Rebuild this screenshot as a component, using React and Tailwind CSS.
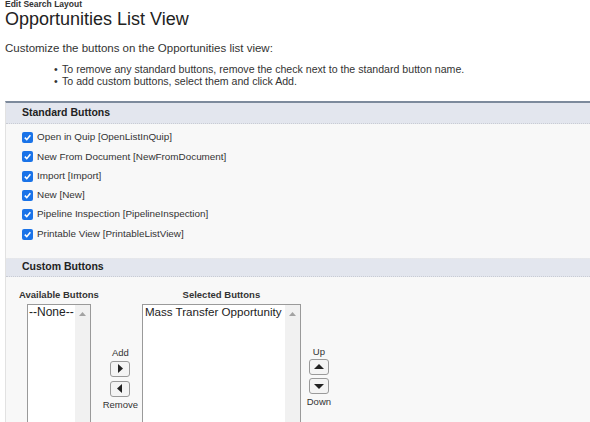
import React from "react";

const items = [
  "Open in Quip [OpenListInQuip]",
  "New From Document [NewFromDocument]",
  "Import [Import]",
  "New [New]",
  "Pipeline Inspection [PipelineInspection]",
  "Printable View [PrintableListView]",
];

function Check() {
  return (
    <span className="w-[11px] h-[11px] rounded-[2px] bg-[#1a73e8] flex items-center justify-center shrink-0">
      <svg width="9" height="9" viewBox="0 0 10 10">
        <path d="M2 5.2 L4.2 7.4 L8.2 2.6" stroke="white" strokeWidth="1.8" fill="none" />
      </svg>
    </span>
  );
}

function ScrollUp() {
  return (
    <div className="w-[15px] bg-[#f1f1f1] flex justify-center pt-[7px]">
      <svg width="7" height="4" viewBox="0 0 7 4"><path d="M0 4 L3.5 0 L7 4Z" fill="#a3a3a3" /></svg>
    </div>
  );
}

function ArrowBtn({ dir }) {
  const d = {
    right: "M3 0 L8 4.5 L3 9Z",
    left: "M7 0 L2 4.5 L7 9Z",
    up: "M0 7 L5 2 L10 7Z",
    down: "M0 3 L5 8 L10 3Z",
  }[dir];
  return (
    <div className="w-[20px] h-[16px] border border-[#9a9a9a] rounded-[3px] bg-[#f4f4f4] flex items-center justify-center">
      <svg width="10" height="9" viewBox="0 0 10 9"><path d={d} fill="#222" /></svg>
    </div>
  );
}

export default function App() {
  return (
    <div className="w-[590px] h-[422px] overflow-hidden bg-white text-[#222]" style={{ fontFamily: '"Liberation Sans", Arial, sans-serif' }}>
      <div className="pl-[5px]">
        <div className="text-[8.5px] font-bold leading-[9px] text-[#333]">Edit Search Layout</div>
        <div className="text-[18px] leading-[20px] text-[#222]">Opportunities List View</div>
        <div className="text-[11.5px] leading-[12px] mt-[13px] text-[#333]">Customize the buttons on the Opportunities list view:</div>
        <ul className="text-[10.6px] leading-[12px] mt-[9px] pl-[49px] text-[#333]">
          <li className="flex"><span className="w-[8px]">•</span>To remove any standard buttons, remove the check next to the standard button name.</li>
          <li className="flex"><span className="w-[8px]">•</span>To add custom buttons, select them and click Add.</li>
        </ul>
      </div>
      <div className="ml-[5px] mt-[14px] border-t-2 border-t-[#7d8a9c] border-l border-l-[#e2e2e2] bg-[#f8f8f8] h-[400px]">
        <div className="h-[21px] bg-[#e3e6ee] border-b border-dotted border-b-[#c9ccd4] flex items-center pl-[16px] text-[10.5px] font-bold text-[#222]">
          Standard Buttons
        </div>
        <div className="pl-[16px] pt-[4px] flex flex-col">
          {items.map((t) => (
            <div key={t} className="h-[19.3px] flex items-center gap-[4px] text-[9.9px] text-[#333]">
              <Check />
              <span>{t}</span>
            </div>
          ))}
        </div>
        <div className="mt-[14px] h-[19px] bg-[#e3e6ee] border-t border-dotted border-t-[#e8e8e8] border-b border-b-[#c9ccd4] flex items-center pl-[16px] text-[10.5px] font-bold text-[#222]">
          Custom Buttons
        </div>
        <div className="flex pl-[13px] pt-[12px]">
          <div className="flex flex-col items-start">
            <div className="text-[9.5px] font-bold leading-[11px] text-[#333]">Available Buttons</div>
            <div className="ml-[8px] mt-[4px] w-[64px] h-[130px] border border-[#9a9a9a] bg-white flex">
              <div className="flex-1 text-[12px] leading-[14px] pl-[1px]">--None--</div>
              <ScrollUp />
            </div>
          </div>
          <div className="w-[43px] flex flex-col items-center pt-[58px] text-[9.5px] text-[#333]">
            <div className="leading-[11px] mb-[3px]">Add</div>
            <ArrowBtn dir="right" />
            <div className="h-[4px]" />
            <ArrowBtn dir="left" />
            <div className="leading-[11px] mt-[2px]">Remove</div>
          </div>
          <div className="flex flex-col items-center">
            <div className="text-[9.5px] font-bold leading-[11px] text-[#333]">Selected Buttons</div>
            <div className="mt-[4px] w-[159px] h-[130px] border border-[#9a9a9a] bg-white flex">
              <div className="flex-1 text-[11.6px] leading-[14px] pl-[2px]">Mass Transfer Opportunity</div>
              <ScrollUp />
            </div>
          </div>
          <div className="w-[36px] flex flex-col items-center pt-[57px] text-[9.5px] text-[#333]">
            <div className="leading-[11px] mb-[2px]">Up</div>
            <ArrowBtn dir="up" />
            <div className="h-[3px]" />
            <ArrowBtn dir="down" />
            <div className="leading-[11px] mt-[2px]">Down</div>
          </div>
        </div>
      </div>
    </div>
  );
}
